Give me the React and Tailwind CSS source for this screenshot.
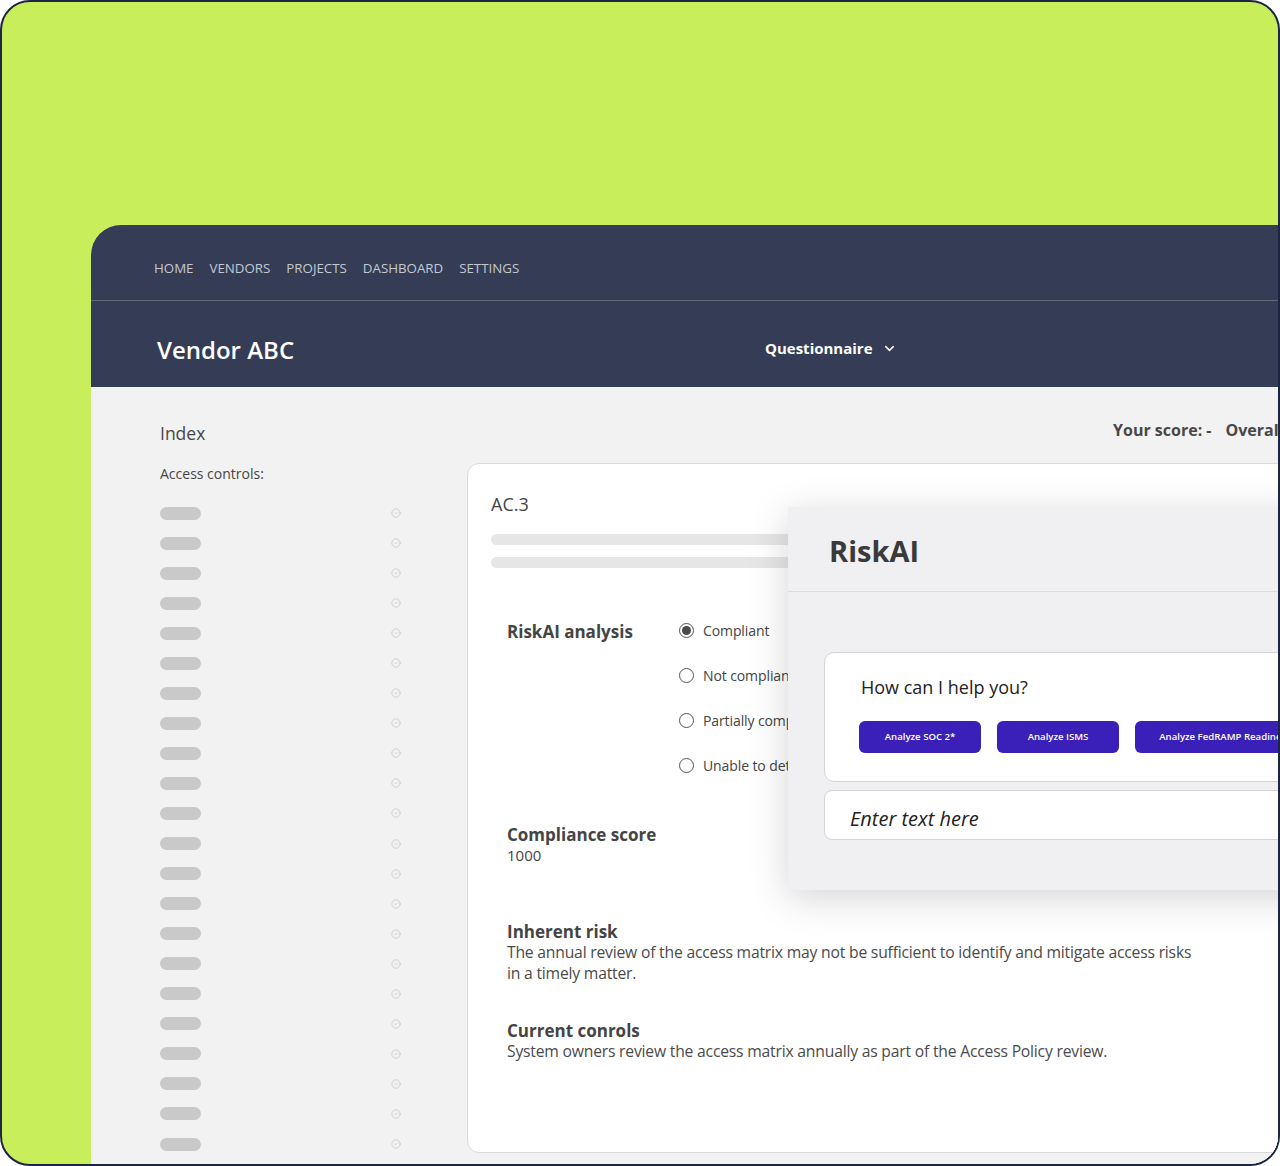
import { ChevronDown, CircleCheck } from 'lucide-react';

const navItems = ['HOME', 'VENDORS', 'PROJECTS', 'DASHBOARD', 'SETTINGS'];
const options = ['Compliant', 'Not compliant', 'Partially compliant', 'Unable to determine'];
const actions = [
  { label: 'Analyze SOC 2*', w: 'w-[122px]' },
  { label: 'Analyze ISMS', w: 'w-[122px]' },
  { label: 'Analyze FedRAMP Readiness', w: 'w-[180px]' },
];
const indexRows = Array.from({ length: 22 });

function Radio({ checked, label }) {
  return (
    <div className="flex items-center h-[24px] gap-[9px]">
      <span className="w-[15px] h-[15px] rounded-full border-[1.5px] border-[#555] flex items-center justify-center shrink-0">
        {checked && <span className="w-[9px] h-[9px] rounded-full bg-[#4a4a4a]" />}
      </span>
      <span className="text-[14px] text-[#444] whitespace-nowrap tracking-[-0.1px]">{label}</span>
    </div>
  );
}

function RiskPanel() {
  return (
    <div className="absolute left-[320px] top-[43px] w-[560px] h-[383px] bg-[#f0f0f2] shadow-[0_8px_36px_rgba(0,0,0,0.17)]">
      <div className="h-[85px] pl-[41px] pt-[4px] flex items-center border-b border-[#dcdcde]">
        <h2 className="text-[29px] font-bold text-[#3a3a3a]">RiskAI</h2>
      </div>
      <div className="pl-[36px] pt-[60px]">
        <div className="h-[130px] bg-white rounded-[10px] border border-[#d4d4d6] pl-[34px] pt-[21px]">
          <p className="ml-[2px] text-[18px] leading-[26px] text-[#222]">How can I help you?</p>
          <div className="flex gap-[16px] mt-[21px]">
            {actions.map((a) => (
              <button
                key={a.label}
                className={`${a.w} h-[32px] rounded-[6px] bg-[#3a1fb8] text-white text-[9.6px] font-semibold whitespace-nowrap`}
              >
                {a.label}
              </button>
            ))}
          </div>
        </div>
        <div className="mt-[8px] h-[50px] bg-white rounded-[8px] border border-[#d4d4d6] pl-[25px] pt-[7px] flex items-center">
          <span className="text-[20px] italic text-[#222] font-stretch-[88%]">Enter text here</span>
        </div>
      </div>
    </div>
  );
}

export default function App() {
  return (
    <div className="w-[1280px] h-[1166px] overflow-hidden font-['Open_Sans',sans-serif]">
      <div className="h-full rounded-[30px] border-2 border-[#1c2544] bg-[#c9ee5b] overflow-hidden pl-[89px] pt-[223px]">
        <div className="w-[1240px] h-full rounded-tl-[30px] overflow-hidden flex flex-col bg-[#f1f1f1]">
          {/* top nav */}
          <nav className="h-[76px] bg-[#343d55] pl-[63px] pt-[34px] flex gap-[16px] border-b border-[#5f6778]">
            {navItems.map((n) => (
              <span key={n} className="text-[13.3px] leading-[18px] text-[#c3c8d3]">
                {n}
              </span>
            ))}
          </nav>

          {/* vendor header */}
          <header className="h-[86px] bg-[#343d55] pl-[66px] pt-[33px] flex items-start">
            <h1 className="w-[608px] text-[24px] leading-[32px] font-semibold text-white">Vendor ABC</h1>
            <button className="mt-[4px] flex items-center gap-[9px] text-white">
              <span className="text-[15px] leading-[20px] font-bold">Questionnaire</span>
              <ChevronDown size={15} strokeWidth={2.5} />
            </button>
          </header>

          <div className="flex-1 flex bg-[#f2f2f2]">
            {/* index sidebar */}
            <aside className="w-[376px] shrink-0 pl-[69px] pt-[34px]">
              <h3 className="text-[17.5px] leading-[24px] text-[#474747]">Index</h3>
              <p className="mt-[19px] text-[14px] leading-[20px] text-[#444]">Access controls:</p>
              <ul className="mt-[14px] w-[241px]">
                {indexRows.map((_, i) => (
                  <li key={i} className="h-[30.05px] flex items-center justify-between">
                    <span className="w-[41px] h-[13px] rounded-full bg-[#c9c9c9]" />
                    <CircleCheck size={10} strokeWidth={1.5} className="text-[#bdbdbd]" />
                  </li>
                ))}
              </ul>
            </aside>

            {/* question detail */}
            <main className="flex-1 pt-[32px] pb-[11px] flex flex-col">
              <div className="pl-[646px] flex gap-[14px] whitespace-nowrap text-[16px] leading-[22px] font-bold text-[#484848]">
                <span>Your score: -</span>
                <span>Overall score: -</span>
              </div>

              <section className="relative mt-[22px] flex-1 bg-white rounded-[12px] border border-[#d9d9d9] pl-[23px] pt-[27px]">
                <p className="text-[18px] leading-[26px] text-[#444]">AC.3</p>
                <div className="mt-[17px] w-[420px] h-[11px] rounded-full bg-[#e6e6e6]" />
                <div className="mt-[12px] w-[420px] h-[11px] rounded-full bg-[#e6e6e6]" />

                <div className="pl-[16px]">
                  <div className="mt-[50px] flex">
                    <h4 className="w-[172px] pt-[2px] text-[17px] leading-[24px] font-bold text-[#444]">RiskAI analysis</h4>
                    <div className="flex flex-col gap-[21px]">
                      {options.map((o, i) => (
                        <Radio key={o} label={o} checked={i === 0} />
                      ))}
                    </div>
                  </div>

                  <h4 className="mt-[46px] text-[17px] leading-[24px] font-bold text-[#444]">Compliance score</h4>
                  <p className="text-[15px] leading-[17px] text-[#444]">1000</p>

                  <h4 className="mt-[56px] text-[17px] leading-[24px] font-bold text-[#444]">Inherent risk</h4>
                  <p className="-mt-[2px] w-[697px] text-[15.7px] leading-[21px] text-[#4a4a4a] tracking-[-0.2px]">
                    The annual review of the access matrix may not be sufficient to identify and mitigate access risks in a timely matter.
                  </p>

                  <h4 className="mt-[35px] text-[17px] leading-[24px] font-bold text-[#444]">Current conrols</h4>
                  <p className="-mt-[2px] text-[15.7px] leading-[21px] text-[#4a4a4a] tracking-[-0.2px]">
                    System owners review the access matrix annually as part of the Access Policy review.
                  </p>
                </div>

                <RiskPanel />
              </section>
            </main>
          </div>
        </div>
      </div>
    </div>
  );
}
